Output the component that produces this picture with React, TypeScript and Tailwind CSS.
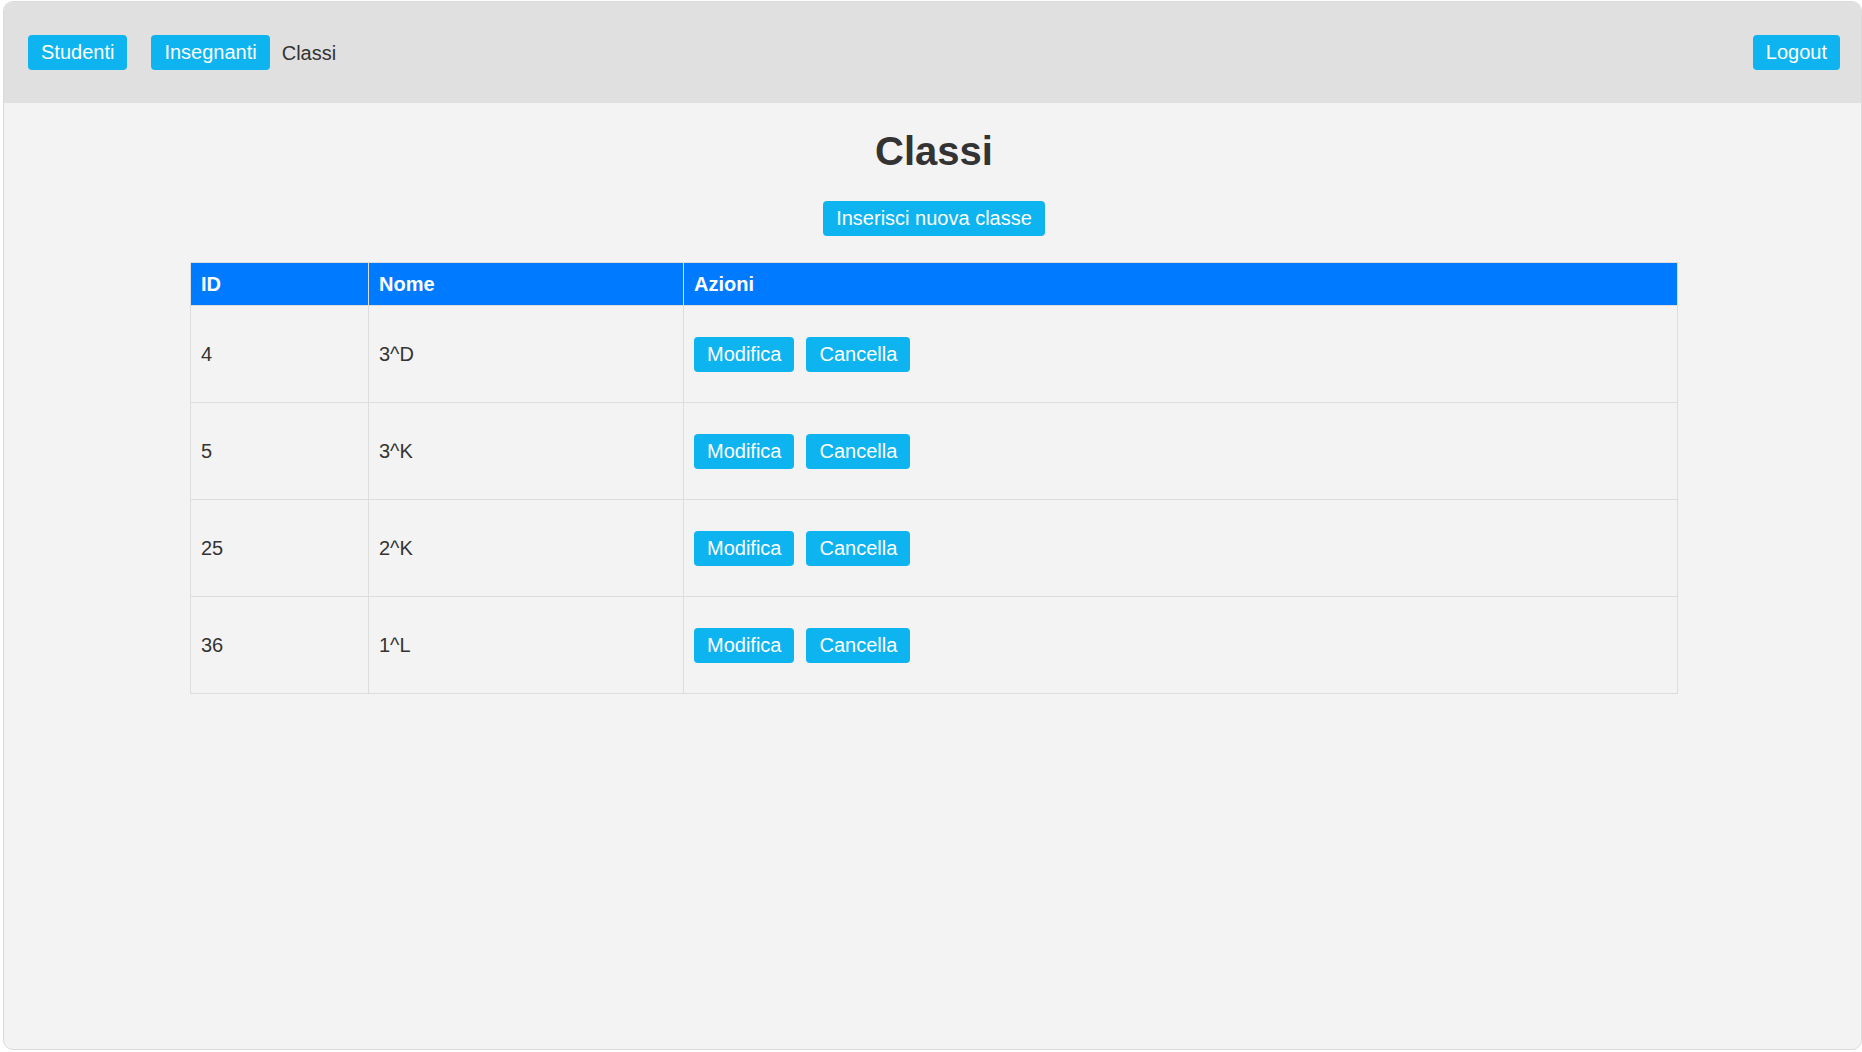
import * as React from 'react'

type Classe = { id: number; nome: string }

const CLASSI: Classe[] = [
  { id: 4, nome: '3^D' },
  { id: 5, nome: '3^K' },
  { id: 25, nome: '2^K' },
  { id: 36, nome: '1^L' },
]

function Btn({ children, className = '' }: { children: React.ReactNode; className?: string }) {
  return (
    <button
      type="button"
      className={`rounded-[4px] bg-[#0db4f0] px-[13px] py-[6px] text-[20px] leading-[23px] text-white ${className}`}
    >
      {children}
    </button>
  )
}

export default function App() {
  return (
    <div
      className="flex h-screen w-full bg-white pt-[1px] pl-[3px] pb-[2px] text-[#333]"
      style={{ fontFamily: '"Liberation Sans", Arial, sans-serif' }}
    >
      <div className="flex flex-1 flex-col overflow-hidden rounded-[10px] border border-[#dadada] bg-[#f3f3f3]">
        {/* top bar */}
        <header className="flex h-[101px] shrink-0 items-center bg-[#e0e0e0] pl-[24px] pr-[21px]">
          <Btn>Studenti</Btn>
          <Btn className="ml-[24px]">Insegnanti</Btn>
          <span className="ml-[12px] text-[20px] text-[#333]">Classi</span>
          <Btn className="ml-auto">Logout</Btn>
        </header>

        <main className="flex flex-col items-center pl-[3px]">
          <h1 className="mt-[25px] text-[40px] font-bold leading-[46px] text-[#333]">Classi</h1>
          <Btn className="mt-[27px]">Inserisci nuova classe</Btn>

          <table className="mt-[26px] w-[1488px] border-collapse border border-[#dddddd] text-[20px]">
            <thead>
              <tr className="h-[43px] bg-[#007bff] text-left font-bold text-white">
                <th className="w-[178px] border border-[#dddddd] px-[10px]">ID</th>
                <th className="w-[315px] border border-[#dddddd] px-[10px]">Nome</th>
                <th className="border border-[#dddddd] px-[10px]">Azioni</th>
              </tr>
            </thead>
            <tbody>
              {CLASSI.map((c) => (
                <tr key={c.id} className="h-[97px]">
                  <td className="border border-[#dddddd] px-[10px]">{c.id}</td>
                  <td className="border border-[#dddddd] px-[10px]">{c.nome}</td>
                  <td className="border border-[#dddddd] px-[10px]">
                    <div className="flex gap-[12px]">
                      <Btn>Modifica</Btn>
                      <Btn>Cancella</Btn>
                    </div>
                  </td>
                </tr>
              ))}
            </tbody>
          </table>
        </main>
      </div>
    </div>
  )
}
